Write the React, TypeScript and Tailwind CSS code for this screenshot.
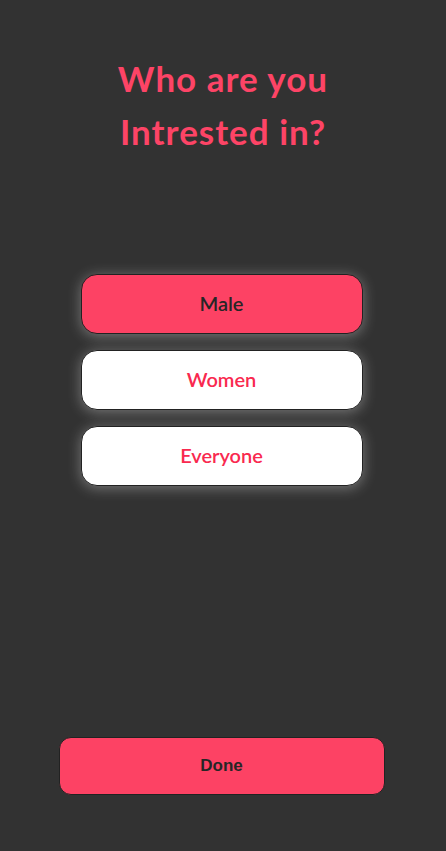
import { useState } from "react";

const options = ["Male", "Women", "Everyone"];

export default function App() {
  const [selected, setSelected] = useState("Male");

  return (
    <div className="flex h-[851px] w-full flex-col items-center bg-[#323232] font-['Lato',sans-serif]">
      {/* Title */}
      <h1 className="mt-[52px] text-center text-[35px] font-bold leading-[53px] tracking-[1px] text-[#fd4466]">
        Who are you
        <br />
        Intrested in?
      </h1>

      {/* Options */}
      <div className="mt-[116px] mr-[3px] flex flex-col gap-[16px]">
        {options.map((option) => {
          const active = selected === option;
          return (
            <button
              key={option}
              onClick={() => setSelected(option)}
              className={`flex h-[60px] w-[282px] items-center justify-center rounded-[16px] border border-[#222] pb-[3px] text-[20px] font-semibold shadow-[0_2px_14px_rgba(255,255,255,0.35)] ${
                active ? "bg-[#fd4264] text-[#262626]" : "bg-white text-[#f9294f]"
              }`}
            >
              {option}
            </button>
          );
        })}
      </div>

      {/* Done */}
      <button className="mt-auto mb-[56px] mr-[3px] flex h-[58px] w-[326px] items-center justify-center rounded-[12px] border border-[#222] bg-[#fd4264] font-['Liberation_Sans',sans-serif] text-[17px] font-bold text-[#262626]">
        Done
      </button>
    </div>
  );
}
